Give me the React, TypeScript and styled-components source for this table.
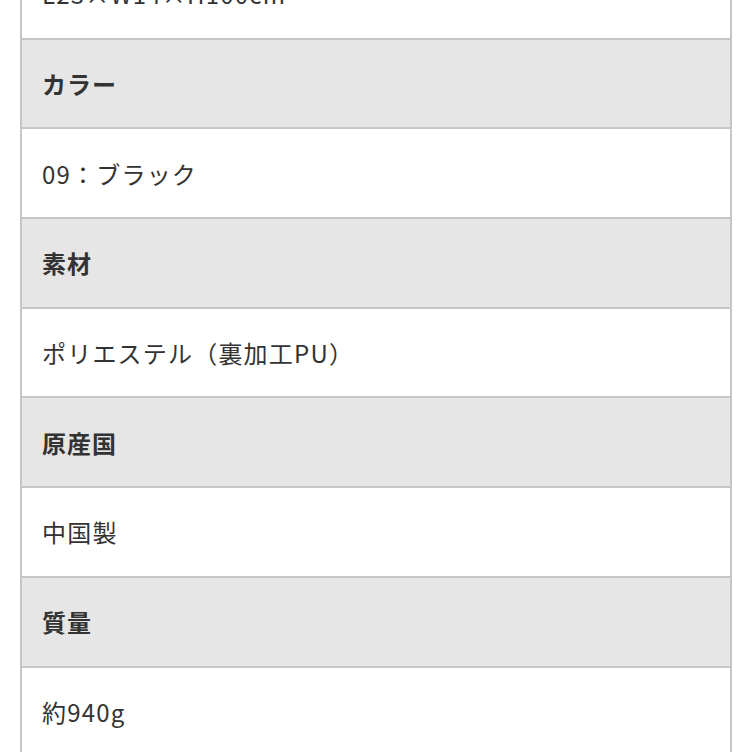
import React from "react";
import styled, { createGlobalStyle } from "styled-components";

const Global = createGlobalStyle`
  html, body { margin: 0; padding: 0; background: #ffffff; }
  body {
    font-family: "Noto Sans CJK JP", "Noto Sans", sans-serif;
    overflow: hidden;
  }
`;

const Page = styled.div`
  width: 752px;
  height: 752px;
  overflow: hidden;
  padding: 0 20px 0 20px;
  box-sizing: border-box;
`;

const Table = styled.div`
  margin-top: -50px;
  border-left: 2px solid #c6c6c6;
  border-right: 2px solid #c6c6c6;
  width: 712px;
  box-sizing: border-box;
  display: flex;
  flex-direction: column;
`;

const Cell = styled.div<{ $head?: boolean }>`
  height: 89.7px;
  box-sizing: border-box;
  border-bottom: 2px solid #c6c6c6;
  background: ${(p) => (p.$head ? "#e6e6e6" : "#ffffff")};
  display: flex;
  align-items: center;
  padding: 0 0 0 20px;
  font-size: 24px;
  color: ${(p) => (p.$head ? "#333333" : "#333333")};
  font-weight: ${(p) => (p.$head ? 700 : 400)};
  letter-spacing: ${(p) => (p.$head ? "1px" : "1.2px")};
  white-space: nowrap;
`;

const rows: { label: string; value: string }[] = [
  { label: "サイズ", value: "L23×W14×H100cm" },
  { label: "カラー", value: "09：ブラック" },
  { label: "素材", value: "ポリエステル（裏加工PU）" },
  { label: "原産国", value: "中国製" },
  { label: "質量", value: "約940g" },
];

export default function App() {
  return (
    <>
      <Global />
      <Page>
        <Table>
          {rows.map((r, i) => (
            <React.Fragment key={r.label}>
              {i > 0 && <Cell $head>{r.label}</Cell>}
              <Cell>{r.value}</Cell>
            </React.Fragment>
          ))}
        </Table>
      </Page>
    </>
  );
}
